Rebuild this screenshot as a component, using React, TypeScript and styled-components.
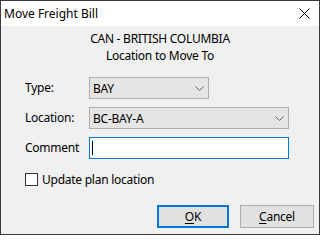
import React from "react";
import styled, { createGlobalStyle } from "styled-components";

const GlobalStyle = createGlobalStyle`
  html, body {
    margin: 0;
    padding: 0;
    background: #ffffff;
  }
  body {
    font-family: "Noto Sans", "Liberation Sans", sans-serif;
    font-size: 12px;
    letter-spacing: -0.25px;
    color: #000000;
  }
`;

const Window = styled.div`
  width: 320px;
  height: 235px;
  box-sizing: border-box;
  border: 1px solid #3a3a3a;
  display: flex;
  flex-direction: column;
  background: #f0f0f0;
`;

const TitleBar = styled.div`
  height: 25px;
  flex: none;
  background: #ffffff;
  display: flex;
  align-items: center;
  justify-content: space-between;
  padding: 0 9px 0 3px;
`;

const Title = styled.span`
  font-size: 12px;
  line-height: 16px;
  letter-spacing: 0;
`;

const Body = styled.div`
  flex: 1;
  display: flex;
  flex-direction: column;
  padding: 4px 5px 0 24px;
`;

const Header = styled.div`
  text-align: center;
  line-height: 17px;
  margin-left: -19px;
`;

const Form = styled.div`
  display: grid;
  grid-template-columns: 64px 1fr;
  row-gap: 8px;
  margin-top: 13px;
  align-items: center;
`;

const Label = styled.span`
  line-height: 22px;
`;

const Select = styled.div<{ $width: number }>`
  width: ${(p) => p.$width}px;
  height: 22px;
  box-sizing: border-box;
  border: 1px solid #adadad;
  background: #e5e5e5;
  display: flex;
  align-items: center;
  justify-content: space-between;
  padding: 0 4px 0 3px;
`;

const Input = styled.div`
  width: 200px;
  height: 22px;
  box-sizing: border-box;
  border: 1px solid #0078d7;
  background: #ffffff;
  display: flex;
  align-items: center;
  padding-left: 2px;
`;

const Caret = styled.span`
  width: 1px;
  height: 14px;
  background: #000000;
`;

const CheckRow = styled.label`
  display: flex;
  align-items: center;
  gap: 4px;
  margin-top: 14px;
  height: 13px;
`;

const CheckBox = styled.span`
  width: 13px;
  height: 13px;
  box-sizing: border-box;
  border: 1px solid #333333;
  background: #ffffff;
`;

const Buttons = styled.div`
  display: flex;
  justify-content: flex-end;
  gap: 11px;
  margin-top: 19px;
`;

const Button = styled.button<{ $default?: boolean; $width: number }>`
  width: ${(p) => p.$width}px;
  height: 23px;
  box-sizing: border-box;
  font: inherit;
  letter-spacing: inherit;
  color: #000000;
  background: #e1e1e1;
  border: ${(p) => (p.$default ? "2px solid #0078d7" : "1px solid #adadad")};
  padding: 0;
  u {
    text-decoration: underline;
    text-underline-offset: 2px;
  }
`;

const Chevron = () => (
  <svg width="9" height="5" viewBox="0 0 9 5">
    <path d="M0.5 0.5 L4.5 4.5 L8.5 0.5" fill="none" stroke="#606060" strokeWidth="1" />
  </svg>
);

const CloseIcon = () => (
  <svg width="11" height="11" viewBox="0 0 11 11">
    <path d="M0.5 0.5 L10.5 10.5 M10.5 0.5 L0.5 10.5" stroke="#000" strokeWidth="1" />
  </svg>
);

export default function App() {
  return (
    <>
      <GlobalStyle />
      <Window>
        <TitleBar>
          <Title>Move Freight Bill</Title>
          <CloseIcon />
        </TitleBar>
        <Body>
          <Header>
            <div>CAN - BRITISH COLUMBIA</div>
            <div>Location to Move To</div>
          </Header>
          <Form>
            <Label>Type:</Label>
            <Select $width={120}>
              <span>BAY</span>
              <Chevron />
            </Select>
            <Label>Location:</Label>
            <Select $width={200}>
              <span>BC-BAY-A</span>
              <Chevron />
            </Select>
            <Label>Comment</Label>
            <Input>
              <Caret />
            </Input>
          </Form>
          <CheckRow>
            <CheckBox />
            <span>Update plan location</span>
          </CheckRow>
          <Buttons>
            <Button $default $width={72}>
              <u>O</u>K
            </Button>
            <Button $width={74}>
              <u>C</u>ancel
            </Button>
          </Buttons>
        </Body>
      </Window>
    </>
  );
}
